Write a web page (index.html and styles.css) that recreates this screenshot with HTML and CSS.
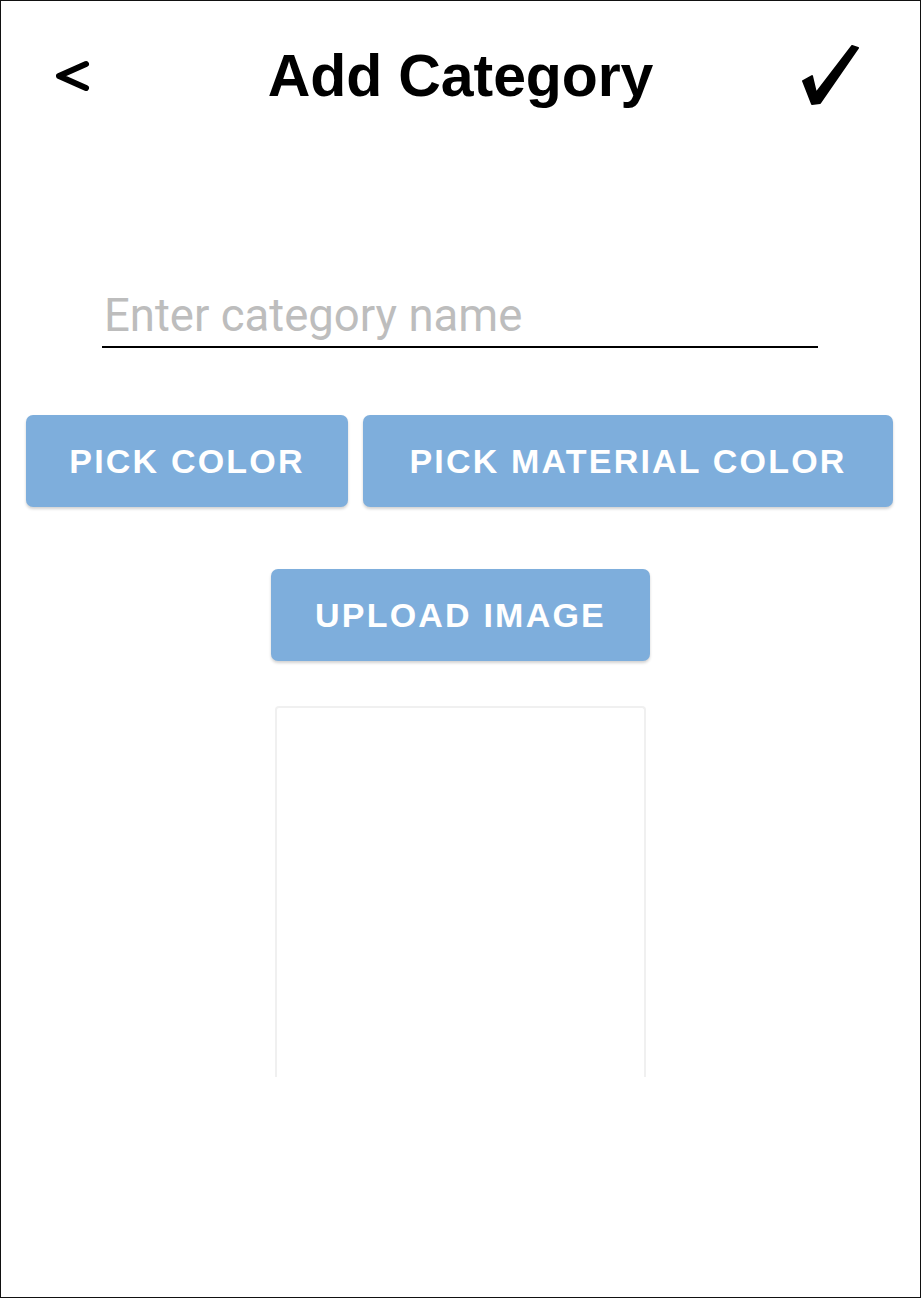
FILE: index.html
```html
<!DOCTYPE html>
<html lang="en">
<head>
<meta charset="utf-8">
<title>Add Category</title>
<link rel="stylesheet" href="styles.css">
</head>
<body>
<div class="screen">
  <header class="header">
    <button class="icon-btn back" aria-label="Back">
      <svg width="40" height="40" viewBox="0 0 40 40"><polyline points="30,8 3,20 30,32" fill="none" stroke="#000" stroke-width="6" stroke-linecap="round" stroke-linejoin="round"/></svg>
    </button>
    <h1 class="title">Add Category</h1>
    <button class="icon-btn done" aria-label="Save">
      <svg width="60" height="62" viewBox="0 0 60 62"><path d="M3 36 L12 31 L16 48 L52 1 L58 3 L20 58 L12 59 Z" fill="#000" stroke="#000" stroke-width="2" stroke-linejoin="round"/></svg>
    </button>
  </header>

  <div class="field">
    <input class="name-input" type="text" placeholder="Enter category name">
  </div>

  <div class="btn-row">
    <button class="btn">PICK COLOR</button>
    <button class="btn">PICK MATERIAL COLOR</button>
  </div>

  <div class="upload-row">
    <button class="btn upload">UPLOAD IMAGE</button>
  </div>

  <div class="preview"></div>
</div>
</body>
</html>
```

FILE: styles.css
```css
html, body {
  margin: 0;
  padding: 0;
  background: #fff;
}

.screen {
  width: 921px;
  height: 1298px;
  box-sizing: border-box;
  border: 1px solid #111;
  background: #fff;
  font-family: "Liberation Sans", Arial, sans-serif;
  overflow: hidden;
}

.header {
  display: grid;
  grid-template-columns: 1fr auto 1fr;
  align-items: center;
  padding: 44px 55px 0 55px;
}

.icon-btn {
  background: none;
  border: 0;
  padding: 0;
  margin: 0;
  display: flex;
  cursor: pointer;
}

.back { justify-self: start; }
.done { justify-self: end; margin-right: 5px; }

.title {
  margin: 0;
  font-size: 59px;
  line-height: 58px;
  font-weight: 700;
  color: #000;
  letter-spacing: -0.1px;
}

.field {
  margin: 183px 0 0 101px;
  width: 716px;
}

.name-input {
  display: block;
  width: 100%;
  box-sizing: border-box;
  height: 58px;
  border: 0;
  border-bottom: 2px solid #000;
  padding: 0 0 6px 2px;
  font-family: Roboto, "Liberation Sans", sans-serif;
  font-size: 45.5px;
  line-height: 52px;
  color: #222;
  background: transparent;
  outline: none;
}

.name-input::placeholder {
  color: #bdbdbd;
}

.btn-row {
  display: grid;
  grid-template-columns: 322px 530px;
  gap: 15px;
  margin: 67px 0 0 25px;
}

.btn {
  height: 92px;
  border: 0;
  border-radius: 7px;
  background: #7eaedc;
  color: #fff;
  font-family: "Liberation Sans", Arial, sans-serif;
  font-weight: 700;
  font-size: 34px;
  letter-spacing: 2.2px;
  box-shadow: 0 2px 3px rgba(0, 0, 0, 0.18);
  padding: 0;
  cursor: pointer;
}

.upload-row {
  display: flex;
  justify-content: center;
  margin-top: 62px;
}

.upload {
  width: 379px;
}

.preview {
  width: 371px;
  height: 371px;
  margin: 45px auto 0;
  box-sizing: border-box;
  border: 2px solid #f0f0f0;
  border-bottom: 0;
  border-radius: 4px 4px 0 0;
  background: #fff;
}
```
